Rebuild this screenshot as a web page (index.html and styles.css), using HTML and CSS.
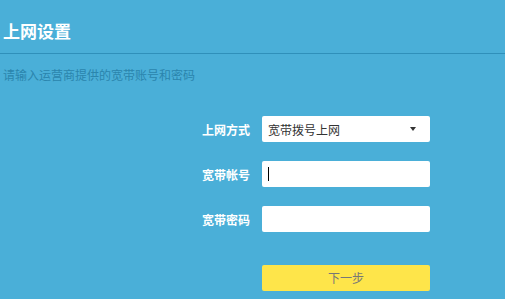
FILE: index.html
```html
<!DOCTYPE html>
<html lang="zh-CN">
<head>
    <meta charset="UTF-8">
    <meta name="viewport" content="width=device-width, initial-scale=1.0">
    <title>上网设置</title>
    <link rel="stylesheet" href="styles.css">
</head>
<body>
<div class="page">
    <div class="header">
        <h1>上网设置</h1>
    </div>
    <p class="hint">请输入运营商提供的宽带账号和密码</p>
    <form class="form">
        <div class="row">
            <label class="label">上网方式</label>
            <div class="select">
                <span>宽带拨号上网</span>
                <span class="arrow"></span>
            </div>
        </div>
        <div class="row">
            <label class="label">宽带帐号</label>
            <div class="input"><span class="cursor"></span></div>
        </div>
        <div class="row">
            <label class="label">宽带密码</label>
            <div class="input"></div>
        </div>
        <div class="row actions">
            <span class="label"></span>
            <div class="button">下一步</div>
        </div>
    </form>
</div>
</body>
</html>
```

FILE: styles.css
```css
body {
    margin: 0;
    padding: 0;
    background-color: #4aafd8;
    font-family: "Noto Sans CJK SC", "Noto Sans", sans-serif;
}

.page {
    height: 299px;
    overflow: hidden;
}

.header {
    padding: 20px 3px 0;
    border-bottom: 1px solid #2f90ba;
    box-sizing: border-box;
    height: 54px;
}

h1 {
    margin: 0;
    font-size: 17px;
    line-height: 22px;
    color: #fff;
    font-weight: bold;
}

.hint {
    margin: 13px 0 0 3px;
    font-size: 12px;
    line-height: 16px;
    color: #2b85ad;
}

.form {
    margin-top: 33px;
}

.row {
    display: grid;
    grid-template-columns: 250px 168px;
    column-gap: 12px;
    align-items: center;
    margin-bottom: 19px;
}

.label {
    text-align: right;
    font-size: 12px;
    font-weight: bold;
    color: #fff;
}

.select,
.input {
    height: 26px;
    background-color: #fff;
    border-radius: 2px;
    box-sizing: border-box;
    display: flex;
    align-items: center;
    padding: 0 6px;
}

.select {
    justify-content: space-between;
    font-size: 12px;
    color: #333;
}

.arrow {
    width: 0;
    height: 0;
    border-left: 3px solid transparent;
    border-right: 3px solid transparent;
    border-top: 4px solid #333;
    margin-right: 8px;
}

.cursor {
    width: 1px;
    height: 14px;
    background-color: #000;
}

.actions {
    margin-top: 33px;
}

.button {
    height: 26px;
    background-color: #fee54a;
    border-radius: 2px;
    text-align: center;
    line-height: 26px;
    font-size: 12px;
    color: #777;
}
```
